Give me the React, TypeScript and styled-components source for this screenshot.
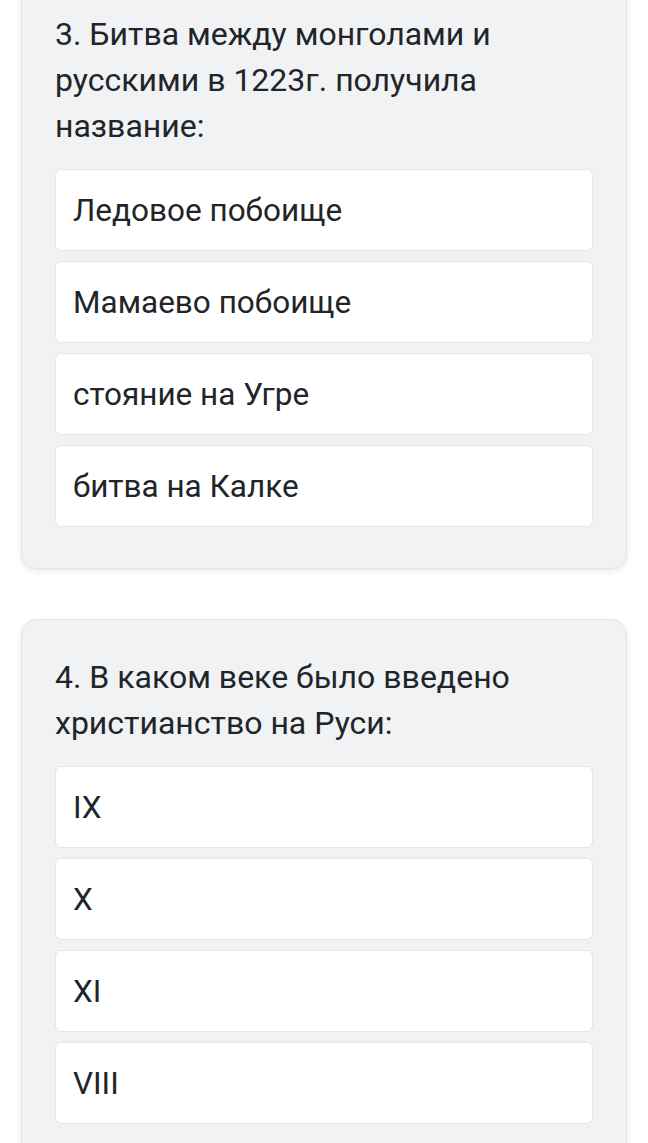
import React from "react";
import styled, { createGlobalStyle } from "styled-components";

const GlobalStyle = createGlobalStyle`
  body {
    margin: 0;
    background: #ffffff;
    font-family: Roboto, "Noto Sans", Arial, sans-serif;
    color: #212529;
  }
`;

const Page = styled.div`
  display: flex;
  flex-direction: column;
  gap: 50px;
  padding: 0 21px 40px;
  margin-top: -24px;
`;

const Card = styled.section`
  background: #f1f2f4;
  border: 1px solid #e3e5e8;
  border-radius: 16px;
  box-shadow: 0 3px 6px rgba(0, 0, 0, 0.08);
  padding: 34px 33px 41px;
`;

const Question = styled.div`
  font-size: 32px;
  line-height: 46px;
  margin-bottom: 20px;
`;

const Options = styled.div`
  display: flex;
  flex-direction: column;
  gap: 10px;
`;

const Option = styled.div`
  background: #ffffff;
  border: 1.5px solid #e3e5e8;
  border-radius: 6px;
  height: 82px;
  display: flex;
  align-items: center;
  padding: 0 17px;
  font-size: 31.5px;
  box-sizing: border-box;
`;

const questions = [
  {
    title: "3. Битва между монголами и русскими в 1223г. получила название:",
    options: ["Ледовое побоище", "Мамаево побоище", "стояние на Угре", "битва на Калке"],
  },
  {
    title: "4. В каком веке было введено христианство на Руси:",
    options: ["IX", "X", "XI", "VIII"],
  },
];

const App: React.FC = () => {
  return (
    <>
      <GlobalStyle />
      <Page>
        {questions.map((q, index) => (
          <Card key={index}>
            <Question>{q.title}</Question>
            <Options>
              {q.options.map((opt) => (
                <Option key={opt}>{opt}</Option>
              ))}
            </Options>
          </Card>
        ))}
      </Page>
    </>
  );
};

export default App;
